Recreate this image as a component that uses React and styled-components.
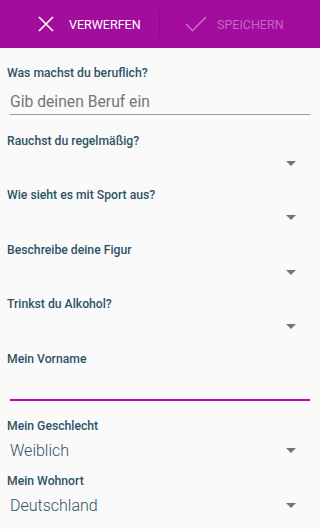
import React from "react";
import styled, { createGlobalStyle } from "styled-components";

const GlobalStyle = createGlobalStyle`
  html, body {
    margin: 0;
    padding: 0;
    background: #fafafa;
    font-family: Roboto, "Liberation Sans", sans-serif;
  }
`;

const Page = styled.div`
  width: 320px;
  min-height: 529px;
  background: #fafafa;
`;

const Toolbar = styled.div`
  height: 48px;
  background: #a20d9d;
  display: flex;
  align-items: center;
`;

const Action = styled.div`
  flex: 0 0 ${(p) => p.$width}px;
  height: 100%;
  display: flex;
  align-items: center;
  gap: ${(p) => p.$gap}px;
  padding-left: ${(p) => p.$pad}px;
  box-sizing: border-box;
  color: ${(p) => (p.$disabled ? "rgba(255,255,255,0.38)" : "#ffffff")};
  font-size: 12.5px;
  text-transform: uppercase;
`;

const Divider = styled.div`
  width: 1px;
  height: 28px;
  background: #8f0a8a;
`;

const Form = styled.div`
  padding: 17px 10px 0 7px;
`;

const Field = styled.div`
  display: flex;
  flex-direction: column;
  margin-bottom: ${(p) => p.$after}px;
`;

const Label = styled.div`
  font-size: 12.2px;
  line-height: 16px;
  font-weight: 500;
  color: #2e5366;
`;

const TextInput = styled.div`
  margin: ${(p) => p.$top}px 0 0 3px;
  height: 24px;
  line-height: 24px;
  font-size: 15.7px;
  color: #757575;
  border-bottom: ${(p) => (p.$focused ? "2px solid #b40fb0" : "1px solid #9e9e9e")};
`;

const SelectRow = styled.div`
  margin: ${(p) => (p.$filled ? 4 : 2)}px 0 0 3px;
  height: 24px;
  display: flex;
  align-items: center;
  justify-content: space-between;
  padding-right: 14px;
`;

const Value = styled.span`
  font-size: 16px;
  font-weight: 300;
  color: #2e5366;
`;

const Caret = styled.span`
  width: 0;
  height: 0;
  border-left: 5px solid transparent;
  border-right: 5px solid transparent;
  border-top: 5px solid #757575;
`;

const CloseIcon = () => (
  <svg width="16" height="16" viewBox="0 0 16 16">
    <path d="M1 1 L15 15 M15 1 L1 15" stroke="#fff" strokeWidth="1.6" fill="none" />
  </svg>
);

const CheckIcon = () => (
  <svg width="22" height="16" viewBox="0 0 22 16">
    <path d="M1 8 L7.5 14.5 L21 1" stroke="rgba(255,255,255,0.38)" strokeWidth="1.6" fill="none" />
  </svg>
);

const Select = ({ label, value, after = 12 }) => (
  <Field $after={value ? after - 2 : after}>
    <Label>{label}</Label>
    <SelectRow $filled={!!value}>
      <Value>{value}</Value>
      <Caret />
    </SelectRow>
  </Field>
);

export default function App() {
  return (
    <Page>
      <GlobalStyle />
      <Toolbar>
        <Action $width={159} $pad={38} $gap={15}>
          <CloseIcon />
          Verwerfen
        </Action>
        <Divider />
        <Action $width={160} $pad={25} $gap={10} $disabled>
          <CheckIcon />
          Speichern
        </Action>
      </Toolbar>
      <Form>
        <Field $after={18}>
          <Label>Was machst du beruflich?</Label>
          <TextInput $top={9}>Gib deinen Beruf ein</TextInput>
        </Field>
        <Select label="Rauchst du regelmäßig?" after={12} />
        <Select label="Wie sieht es mit Sport aus?" after={13} />
        <Select label="Beschreibe deine Figur" after={12} />
        <Select label="Trinkst du Alkohol?" after={13} />
        <Field $after={17}>
          <Label>Mein Vorname</Label>
          <TextInput $top={8} $focused />
        </Field>
        <Select label="Mein Geschlecht" value="Weiblich" after={13} />
        <Select label="Mein Wohnort" value="Deutschland" after={0} />
      </Form>
    </Page>
  );
}
